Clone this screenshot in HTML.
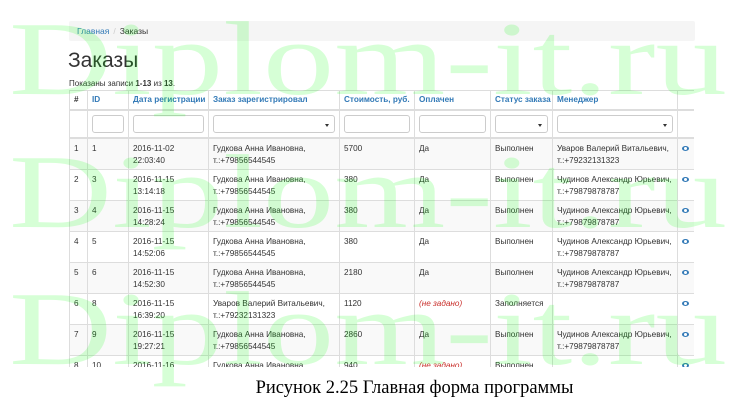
<!DOCTYPE html>
<html><head><meta charset="utf-8"><style>
html,body{margin:0;padding:0;background:#fff;width:737px;height:412px;overflow:hidden;position:relative;font-family:"Liberation Sans",Arial,sans-serif;color:#333}
.bc{position:absolute;left:69px;top:21px;width:626px;height:20px;background:#f5f5f5;border-radius:2px;font-size:8.5px;line-height:20px;box-sizing:border-box;padding-left:8px}
.bc a{color:#337ab7}.bc span{color:#ccc;margin:0 4px}
h1{position:absolute;left:68px;top:49px;margin:0;font-weight:normal;font-size:21px;color:#333}
.sum{position:absolute;left:69px;top:79px;font-size:8px}
.wrap{position:absolute;left:69px;top:90px;width:625px;height:277px;overflow:hidden}
table{border-collapse:collapse;table-layout:fixed;width:625px;font-size:8.2px}
td,th{border:1px solid #ddd;vertical-align:top;line-height:12px;text-align:left;overflow:hidden;white-space:nowrap}
th{color:#337ab7;font-weight:bold;border-bottom:2px solid #ddd;height:12px;padding:3px 4px 3px}
th.h{color:#333}
tr.f td{height:18px;padding:4px 4px 4px;border-bottom:2px solid #ddd}
.in{height:18px;border:1px solid #ccc;border-radius:3px;box-sizing:border-box;position:relative;background:#fff}
.in.s:after{content:"";position:absolute;right:5px;top:8px;border-left:2px solid transparent;border-right:2px solid transparent;border-top:3px solid #333}
tbody tr:nth-child(odd) td{background:#f9f9f9}
tbody td{height:24px;padding:4px 4px 2px}
.red{color:#c9302c;font-style:italic}
.eye{display:inline-block;width:7px;height:5px;border-radius:50%;background:#337ab7;position:relative;margin-top:3px}
.eye:after{content:"";position:absolute;left:2px;top:1px;width:3px;height:3px;border-radius:50%;background:#fff}
.wm{position:absolute;left:9px;font-family:"Liberation Serif",serif;font-size:105px;line-height:1;color:rgba(0,255,0,0.16);transform:scaleX(1.36);transform-origin:0 0;white-space:nowrap;pointer-events:none}
.cap{position:absolute;left:0;width:737px;text-align:center;top:378px;font-family:"Liberation Serif",serif;font-size:18.5px;color:#000;padding-left:92px;box-sizing:border-box}
</style></head><body>
<div class="bc"><a>Главная</a><span>/</span>Заказы</div>
<h1>Заказы</h1>
<div class="sum">Показаны записи <b>1-13</b> из <b>13</b>.</div>
<div class="wrap"><table>
<colgroup><col style="width:18px"><col style="width:41px"><col style="width:80px"><col style="width:131px"><col style="width:75px"><col style="width:76px"><col style="width:62px"><col style="width:125px"><col style="width:17px"></colgroup>
<thead><tr><th class="h">#</th><th>ID</th><th>Дата регистрации</th><th>Заказ зарегистрировал</th><th>Стоимость, руб.</th><th>Оплачен</th><th>Статус заказа</th><th>Менеджер</th><th></th></tr>
<tr class="f"><td></td><td><div class="in"></div></td><td><div class="in"></div></td><td><div class="in s"></div></td><td><div class="in"></div></td><td><div class="in"></div></td><td><div class="in s"></div></td><td><div class="in s"></div></td><td></td></tr></thead>
<tbody>
<tr><td>1</td><td>1</td><td>2016-11-02<br>22:03:40</td><td>Гудкова Анна Ивановна,<br>т.:+79856544545</td><td>5700</td><td>Да</td><td>Выполнен</td><td>Уваров Валерий Витальевич,<br>т.:+79232131323</td><td><span class="eye"></span></td></tr>
<tr><td>2</td><td>3</td><td>2016-11-15<br>13:14:18</td><td>Гудкова Анна Ивановна,<br>т.:+79856544545</td><td>380</td><td>Да</td><td>Выполнен</td><td>Чудинов Александр Юрьевич,<br>т.:+79879878787</td><td><span class="eye"></span></td></tr>
<tr><td>3</td><td>4</td><td>2016-11-15<br>14:28:24</td><td>Гудкова Анна Ивановна,<br>т.:+79856544545</td><td>380</td><td>Да</td><td>Выполнен</td><td>Чудинов Александр Юрьевич,<br>т.:+79879878787</td><td><span class="eye"></span></td></tr>
<tr><td>4</td><td>5</td><td>2016-11-15<br>14:52:06</td><td>Гудкова Анна Ивановна,<br>т.:+79856544545</td><td>380</td><td>Да</td><td>Выполнен</td><td>Чудинов Александр Юрьевич,<br>т.:+79879878787</td><td><span class="eye"></span></td></tr>
<tr><td>5</td><td>6</td><td>2016-11-15<br>14:52:30</td><td>Гудкова Анна Ивановна,<br>т.:+79856544545</td><td>2180</td><td>Да</td><td>Выполнен</td><td>Чудинов Александр Юрьевич,<br>т.:+79879878787</td><td><span class="eye"></span></td></tr>
<tr><td>6</td><td>8</td><td>2016-11-15<br>16:39:20</td><td>Уваров Валерий Витальевич,<br>т.:+79232131323</td><td>1120</td><td class="red">(не задано)</td><td>Заполняется</td><td></td><td><span class="eye"></span></td></tr>
<tr><td>7</td><td>9</td><td>2016-11-15<br>19:27:21</td><td>Гудкова Анна Ивановна,<br>т.:+79856544545</td><td>2860</td><td>Да</td><td>Выполнен</td><td>Чудинов Александр Юрьевич,<br>т.:+79879878787</td><td><span class="eye"></span></td></tr>
<tr><td>8</td><td>10</td><td>2016-11-16<br>10:00:00</td><td>Гудкова Анна Ивановна,<br>т.:+79856544545</td><td>940</td><td class="red">(не задано)</td><td>Выполнен</td><td></td><td><span class="eye"></span></td></tr>
</tbody></table></div>
<div class="wm" style="top:6px">Diplom-it.ru</div>
<div class="wm" style="top:139px">Diplom-it.ru</div>
<div class="wm" style="top:276px">Diplom-it.ru</div>
<div class="cap">Рисунок 2.25 Главная форма программы</div>
</body></html>
